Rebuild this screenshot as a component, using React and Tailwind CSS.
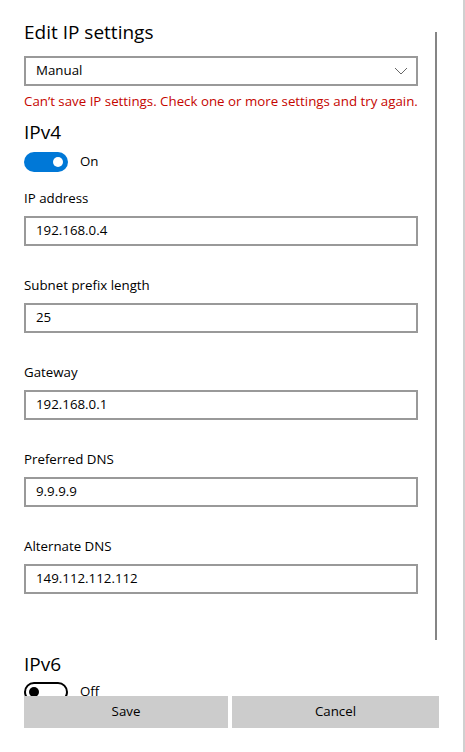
import React, { useState } from 'react';

const FONT = { fontFamily: '"Open Sans", "Noto Sans", sans-serif' };

function Toggle({ on }) {
  if (on) {
    return (
      <div className="w-[44px] h-[20px] rounded-full bg-[#0078d7] flex items-center justify-end pr-[5px]">
        <div className="w-[10px] h-[10px] rounded-full bg-white" />
      </div>
    );
  }
  return (
    <div className="w-[44px] h-[20px] rounded-full border-2 border-black flex items-center pl-[3px]">
      <div className="w-[10px] h-[10px] rounded-full bg-black" />
    </div>
  );
}

function Field({ label, value }) {
  return (
    <div className="flex flex-col">
      <div className="text-[13.3px] leading-[20px] text-black h-[20px]">{label}</div>
      <div className="mt-[8px] w-[394px] h-[30px] border-2 border-[#999999] flex items-center px-[10px] text-[13.3px] text-black">
        {value}
      </div>
    </div>
  );
}

function App() {
  const [mode] = useState('Manual');
  const fields = [
    ['IP address', '192.168.0.4'],
    ['Subnet prefix length', '25'],
    ['Gateway', '192.168.0.1'],
    ['Preferred DNS', '9.9.9.9'],
    ['Alternate DNS', '149.112.112.112'],
  ];

  return (
    <div className="relative w-[465px] h-[752px] bg-white border-r-2 border-[#d0d0d0] flex flex-col" style={FONT}>
      <div className="h-[696px] overflow-hidden px-[24px] pt-[18px]">
        <h1 className="text-[19px] leading-[28px] text-black">Edit IP settings</h1>
        <div className="mt-[10px] w-[394px] h-[30px] border-2 border-[#999999] flex items-center justify-between pl-[10px] pr-[8px] text-[13.3px] text-black">
          <span>{mode}</span>
          <svg width="14" height="8" viewBox="0 0 14 8" fill="none">
            <path d="M1 1 L7 7 L13 1" stroke="#666666" strokeWidth="1" />
          </svg>
        </div>
        <p className="mt-[6px] text-[13.3px] leading-[18px] text-[#c50500]">
          Can’t save IP settings. Check one or more settings and try again.
        </p>
        <h2 className="mt-[8px] text-[19px] leading-[28px] text-black">IPv4</h2>
        <div className="mt-[6px] flex items-center gap-[12px]">
          <Toggle on />
          <span className="text-[13.3px] text-black">On</span>
        </div>
        <div className="mt-[16px] flex flex-col gap-[29px]">
          {fields.map(([label, value]) => (
            <Field key={label} label={label} value={value} />
          ))}
        </div>
        <h2 className="mt-[56px] text-[19px] leading-[28px] text-black">IPv6</h2>
        <div className="mt-[4px] flex items-center gap-[12px]">
          <Toggle on={false} />
          <span className="text-[13.3px] text-black">Off</span>
        </div>
      </div>
      <div className="flex gap-[4px] pl-[24px] pr-[24px]">
        <button className="w-[204px] h-[32px] bg-[#cccccc] text-[13.3px] text-black">Save</button>
        <button className="w-[207px] h-[32px] bg-[#cccccc] text-[13.3px] text-black">Cancel</button>
      </div>
      <div className="absolute left-[435px] top-[32px] w-[2px] h-[608px] bg-[#858585]" />
    </div>
  );
}

export default App;
